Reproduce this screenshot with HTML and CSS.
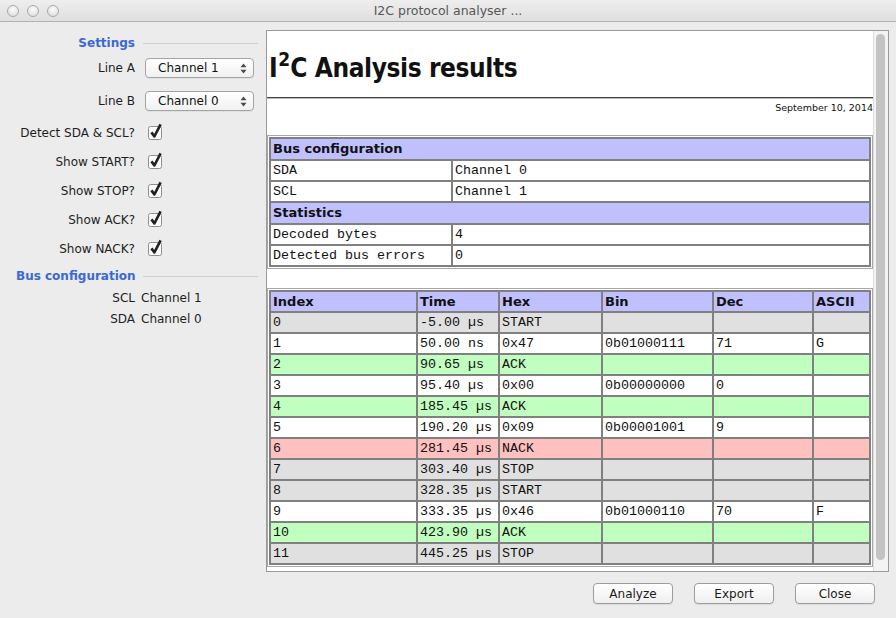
FILE: index.html
```html
<!DOCTYPE html>
<html>
<head>
<meta charset="utf-8">
<title>I2C protocol analyser</title>
<link rel="stylesheet" href="styles.css">
</head>
<body>
<div class="window">
  <header class="titlebar">
    <div class="lights"><span class="light"></span><span class="light"></span><span class="light"></span></div>
    <div class="wintitle">I2C protocol analyser ...</div>
    <div></div>
  </header>
  <div class="main">
    <aside class="sidebar">
      <div class="sec-title">Settings</div><div class="sec-line"></div>

      <div class="lbl">Line A</div>
      <div class="select"><span>Channel 1</span><svg class="updown" width="7" height="11" viewBox="0 0 7 11"><path d="M0.5 4.2 L3.5 0.6 L6.5 4.2 Z M0.5 6.8 L3.5 10.4 L6.5 6.8 Z" fill="#4a4a4a"/></svg></div>

      <div class="lbl">Line B</div>
      <div class="select"><span>Channel 0</span><svg class="updown" width="7" height="11" viewBox="0 0 7 11"><path d="M0.5 4.2 L3.5 0.6 L6.5 4.2 Z M0.5 6.8 L3.5 10.4 L6.5 6.8 Z" fill="#4a4a4a"/></svg></div>

      <div class="lbl">Detect SDA &amp; SCL?</div>
      <svg class="check" width="16" height="17" viewBox="0 0 16 17"><rect x="0.5" y="3.5" width="13" height="13" rx="2" fill="#fbfbfb" stroke="#8f8f8f"/><path d="M3.4 9.4 L6.4 13.4 L12.6 1.4" fill="none" stroke="#222" stroke-width="2.6" stroke-linejoin="round"/></svg>

      <div class="lbl">Show START?</div>
      <svg class="check" width="16" height="17" viewBox="0 0 16 17"><rect x="0.5" y="3.5" width="13" height="13" rx="2" fill="#fbfbfb" stroke="#8f8f8f"/><path d="M3.4 9.4 L6.4 13.4 L12.6 1.4" fill="none" stroke="#222" stroke-width="2.6" stroke-linejoin="round"/></svg>

      <div class="lbl">Show STOP?</div>
      <svg class="check" width="16" height="17" viewBox="0 0 16 17"><rect x="0.5" y="3.5" width="13" height="13" rx="2" fill="#fbfbfb" stroke="#8f8f8f"/><path d="M3.4 9.4 L6.4 13.4 L12.6 1.4" fill="none" stroke="#222" stroke-width="2.6" stroke-linejoin="round"/></svg>

      <div class="lbl">Show ACK?</div>
      <svg class="check" width="16" height="17" viewBox="0 0 16 17"><rect x="0.5" y="3.5" width="13" height="13" rx="2" fill="#fbfbfb" stroke="#8f8f8f"/><path d="M3.4 9.4 L6.4 13.4 L12.6 1.4" fill="none" stroke="#222" stroke-width="2.6" stroke-linejoin="round"/></svg>

      <div class="lbl">Show NACK?</div>
      <svg class="check" width="16" height="17" viewBox="0 0 16 17"><rect x="0.5" y="3.5" width="13" height="13" rx="2" fill="#fbfbfb" stroke="#8f8f8f"/><path d="M3.4 9.4 L6.4 13.4 L12.6 1.4" fill="none" stroke="#222" stroke-width="2.6" stroke-linejoin="round"/></svg>

      <div class="sec-title">Bus configuration</div><div class="sec-line"></div>

      <div class="lbl">SCL</div><div class="val">Channel 1</div>
      <div class="lbl">SDA</div><div class="val">Channel 0</div>
    </aside>

    <section class="right">
      <div class="frame">
        <div class="doc">
          <h1 class="report-title">I<span class="sup">2</span>C Analysis results</h1>
          <hr class="rule">
          <p class="date">September 10, 2014</p>

          <div class="tbl-wrap">
            <table class="kv">
              <colgroup><col class="c-key"><col></colgroup>
              <tr><th colspan="2">Bus configuration</th></tr>
              <tr><td>SDA</td><td>Channel 0</td></tr>
              <tr><td>SCL</td><td>Channel 1</td></tr>
              <tr><th colspan="2">Statistics</th></tr>
              <tr><td>Decoded bytes</td><td>4</td></tr>
              <tr><td>Detected bus errors</td><td>0</td></tr>
            </table>
          </div>

          <div class="tbl-wrap">
            <table class="data">
              <colgroup><col class="c-idx"><col class="c-time"><col class="c-hex"><col class="c-bin"><col class="c-dec"><col></colgroup>
              <tr><th>Index</th><th>Time</th><th>Hex</th><th>Bin</th><th>Dec</th><th>ASCII</th></tr>
              <tr class="r-grey"><td>0</td><td>-5.00 µs</td><td>START</td><td></td><td></td><td></td></tr>
              <tr class="r-white"><td>1</td><td>50.00 ns</td><td>0x47</td><td>0b01000111</td><td>71</td><td>G</td></tr>
              <tr class="r-green"><td>2</td><td>90.65 µs</td><td>ACK</td><td></td><td></td><td></td></tr>
              <tr class="r-white"><td>3</td><td>95.40 µs</td><td>0x00</td><td>0b00000000</td><td>0</td><td></td></tr>
              <tr class="r-green"><td>4</td><td>185.45 µs</td><td>ACK</td><td></td><td></td><td></td></tr>
              <tr class="r-white"><td>5</td><td>190.20 µs</td><td>0x09</td><td>0b00001001</td><td>9</td><td></td></tr>
              <tr class="r-red"><td>6</td><td>281.45 µs</td><td>NACK</td><td></td><td></td><td></td></tr>
              <tr class="r-grey"><td>7</td><td>303.40 µs</td><td>STOP</td><td></td><td></td><td></td></tr>
              <tr class="r-grey"><td>8</td><td>328.35 µs</td><td>START</td><td></td><td></td><td></td></tr>
              <tr class="r-white"><td>9</td><td>333.35 µs</td><td>0x46</td><td>0b01000110</td><td>70</td><td>F</td></tr>
              <tr class="r-green"><td>10</td><td>423.90 µs</td><td>ACK</td><td></td><td></td><td></td></tr>
              <tr class="r-grey"><td>11</td><td>445.25 µs</td><td>STOP</td><td></td><td></td><td></td></tr>
            </table>
          </div>
        </div>
        <div class="scrollbar"><div class="thumb"></div></div>
      </div>
      <div class="buttons">
        <button class="btn">Analyze</button>
        <button class="btn">Export</button>
        <button class="btn">Close</button>
      </div>
    </section>
  </div>
</div>
</body>
</html>
```
FILE: styles.css
```css
* { box-sizing: border-box; }
html, body { margin: 0; padding: 0; }
body {
  width: 896px;
  height: 618px;
  overflow: hidden;
  background: #ececec;
  font-family: "DejaVu Sans", sans-serif;
  font-size: 12px;
  color: #1c1c1c;
}
.window { display: flex; flex-direction: column; height: 618px; }

/* title bar */
.titlebar {
  height: 22px;
  flex: none;
  display: grid;
  grid-template-columns: 1fr auto 1fr;
  align-items: center;
  background: linear-gradient(#eeeeee, #dfdfdf);
  border-bottom: 1px solid #b3b3b3;
}
.lights { display: flex; gap: 8px; padding-left: 7px; }
.light {
  width: 12px; height: 12px; border-radius: 50%;
  border: 1px solid #a8a8a8;
  background: radial-gradient(circle at 50% 35%, #fbfbfb, #dadada);
}
.wintitle { font-size: 12.5px; color: #575757; white-space: nowrap; }

.main { flex: 1; display: flex; min-height: 0; }

/* sidebar */
.sidebar {
  width: 266px;
  flex: none;
  display: grid;
  grid-template-columns: 119px 1fr;
  column-gap: 6px;
  grid-template-rows: 18px 32px 34px repeat(5, 29px) 26px 18px 24px;
  align-items: center;
  align-content: start;
  padding: 12px 0 0 16px;
}
.sec-title { font-weight: bold; color: #3a68d4; text-align: right; white-space: nowrap; }
.sec-line { height: 1px; background: #cdcdcd; margin: 0 8px 0 2px; }
.lbl { text-align: right; white-space: nowrap; color: #1e1e1e; }
.val { white-space: nowrap; color: #1e1e1e; }
.select {
  margin-left: 4px;
  width: 109px;
  height: 20px;
  border: 1px solid #a4a4a4;
  border-radius: 4px;
  background: linear-gradient(#ffffff, #f1f1f1);
  box-shadow: 0 1px 0 rgba(0,0,0,0.05);
  display: flex;
  align-items: center;
  justify-content: space-between;
  padding: 0 6px 0 12px;
  color: #111;
}
.updown { display: block; }
.check { display: block; margin-left: 7px; margin-top: -2px; }

/* right side */
.right { flex: 1; display: flex; flex-direction: column; padding: 8px 7px 0 0; min-width: 0; }
.frame {
  height: 542px;
  flex: none;
  display: flex;
  border: 1px solid #9a9a9a;
  background: #ffffff;
}
.doc { flex: 1; min-width: 0; }
.scrollbar {
  width: 15px;
  flex: none;
  background: #f3f3f3;
  border-left: 1px solid #dedede;
  padding: 3px 3px 11px 2px;
}
.thumb { height: 100%; border-radius: 5px; background: #c3c3c3; }

.report-title {
  margin: 0;
  height: 66px;
  padding: 20px 0 0 2px;
  font-family: "DejaVu Sans Condensed", "DejaVu Sans", sans-serif;
  font-stretch: condensed;
  font-weight: bold;
  font-size: 26px;
  line-height: 34px;
  letter-spacing: -0.4px;
  color: #111;
  white-space: nowrap;
}
.sup { font-size: 19px; line-height: 0; vertical-align: 11px; letter-spacing: 0; margin-left: 1px; }
.rule { margin: 0; height: 0; border: 0; border-top: 1px solid #444; border-bottom: 1px solid #bcbcbc; }
.date {
  margin: 0;
  height: 36px;
  padding-top: 2px;
  line-height: 14px;
  font-size: 9.5px;
  text-align: right;
  color: #111;
}

.tbl-wrap { border: 1px solid #a8a8a8; padding: 1px; }
.tbl-wrap + .tbl-wrap { margin-top: 19px; }
table {
  width: 100%;
  table-layout: fixed;
  border-collapse: separate;
  border-spacing: 0;
  border-top: 2px solid #808080;
  border-left: 2px solid #808080;
}
td, th {
  border-right: 2px solid #808080;
  border-bottom: 2px solid #808080;
  padding: 0 2px;
  white-space: nowrap;
  overflow: hidden;
  text-align: left;
  color: #111;
}
td { font: 13.33px/19px "Liberation Mono", monospace; }
th { font: bold 13px/19px "DejaVu Sans", sans-serif; background: #c0c0ff; }
.kv th { line-height: 20px; }
.c-key { width: 182px; }
.c-idx { width: 147px; }
.c-time { width: 82px; }
.c-hex { width: 103px; }
.c-bin { width: 111px; }
.c-dec { width: 100px; }
.r-grey td { background: #e0e0e0; }
.r-white td { background: #ffffff; }
.r-green td { background: #c0ffc0; }
.r-red td { background: #ffc0c0; }

/* buttons */
.buttons {
  margin-top: 11px;
  display: flex;
  justify-content: flex-end;
  gap: 21px;
  padding-right: 14px;
}
.btn {
  width: 80px;
  height: 21px;
  padding: 0;
  border: 1px solid #9e9e9e;
  border-radius: 4px;
  background: linear-gradient(#ffffff, #efefef);
  box-shadow: 0 1px 1px rgba(0,0,0,0.08);
  font: 12px "DejaVu Sans", sans-serif;
  color: #1a1a1a;
}
```
